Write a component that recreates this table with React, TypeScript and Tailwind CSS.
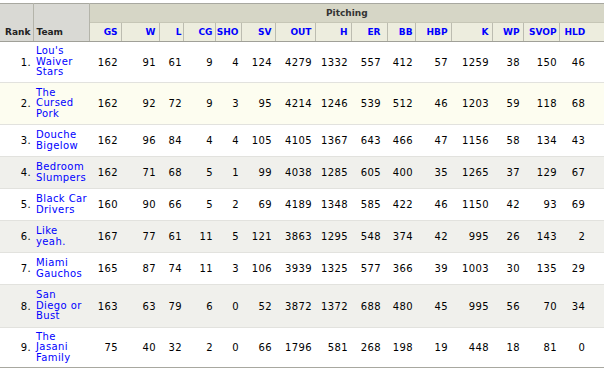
// Pitching standings table
const cols = [
  { label: 'GS', w: 'w-[32px]', pr: 'pr-[3px]' },
  { label: 'W', w: 'w-[38px]', pr: 'pr-[3px]' },
  { label: 'L', w: 'w-[24px]', pr: 'pr-[1px]' },
  { label: 'CG', w: 'w-[32px]', pr: 'pr-[2px]' },
  { label: 'SHO', w: 'w-[26px]', pr: 'pr-[2px]' },
  { label: 'SV', w: 'w-[34px]', pr: 'pr-[3px]' },
  { label: 'OUT', w: 'w-[40px]', pr: 'pr-[3px]' },
  { label: 'H', w: 'w-[36px]', pr: 'pr-[3px]' },
  { label: 'ER', w: 'w-[36px]', pr: 'pr-[6px]' },
  { label: 'BB', w: 'w-[28px]', pr: 'pr-[2px]' },
  { label: 'HBP', w: 'w-[36px]', pr: 'pr-[3px]' },
  { label: 'K', w: 'w-[41px]', pr: 'pr-[3px]' },
  { label: 'WP', w: 'w-[31px]', pr: 'pr-[3px]' },
  { label: 'SVOP', w: 'w-[36px]', pr: 'pr-[2px]' },
  { label: 'HLD', w: 'w-[45px]', pr: 'pr-[19px]' },
];

const rows = [
  { team: ["Lou's", 'Waiver', 'Stars'], h: 'h-[41px]', bg: 'bg-white', stats: [162, 91, 61, 9, 4, 124, 4279, 1332, 557, 412, 57, 1259, 38, 150, 46] },
  { team: ['The', 'Cursed', 'Pork'], h: 'h-[42px]', bg: 'bg-[#fdfdf0]', stats: [162, 92, 72, 9, 3, 95, 4214, 1246, 539, 512, 46, 1203, 59, 118, 68] },
  { team: ['Douche', 'Bigelow'], h: 'h-[32px]', bg: 'bg-white', stats: [162, 96, 84, 4, 4, 105, 4105, 1367, 643, 466, 47, 1156, 58, 134, 43] },
  { team: ['Bedroom', 'Slumpers'], h: 'h-[32px]', bg: 'bg-[#f0f0ec]', stats: [162, 71, 68, 5, 1, 99, 4038, 1285, 605, 400, 35, 1265, 37, 129, 67] },
  { team: ['Black Car', 'Drivers'], h: 'h-[32px]', bg: 'bg-white', stats: [160, 90, 66, 5, 2, 69, 4189, 1348, 585, 422, 46, 1150, 42, 93, 69] },
  { team: ['Like', 'yeah.'], h: 'h-[32px]', bg: 'bg-[#f0f0ec]', stats: [167, 77, 61, 11, 5, 121, 3863, 1295, 548, 374, 42, 995, 26, 143, 2] },
  { team: ['Miami', 'Gauchos'], h: 'h-[32px]', bg: 'bg-white', stats: [165, 87, 74, 11, 3, 106, 3939, 1325, 577, 366, 39, 1003, 30, 135, 29] },
  { team: ['San', 'Diego or', 'Bust'], h: 'h-[43px]', bg: 'bg-[#f0f0ec]', stats: [163, 63, 79, 6, 0, 52, 3872, 1372, 688, 480, 45, 995, 56, 70, 34] },
  { team: ['The', 'Jasani', 'Family'], h: 'h-[40px]', bg: 'bg-white', stats: [75, 40, 32, 2, 0, 66, 1796, 581, 268, 198, 19, 448, 18, 81, 0] },
];

export default function App() {
  return (
    <div className="w-[604px] h-[376px] bg-white pt-[3px] font-['DejaVu_Sans',sans-serif]">
      <table className="w-[604px] table-fixed border-collapse">
        <colgroup>
          <col className="w-[33px]" />
          <col className="w-[56px]" />
          {cols.map((c) => (
            <col key={c.label} className={c.w} />
          ))}
        </colgroup>
        <thead>
          <tr className="h-[19px]">
            <th rowSpan={2} className="bg-[#d9d9d4] border-t border-t-[#a8a8a0] border-r border-r-[#b4b4aa] border-b border-b-[#a0a098] align-bottom text-right pr-[2px] pb-[4px] text-[9px] font-bold leading-[9px] text-[#222]">
              Rank
            </th>
            <th rowSpan={2} className="bg-[#d9d9d4] border-t border-t-[#a8a8a0] border-r border-r-[#b4b4aa] border-b border-b-[#a0a098] align-bottom text-left pl-[3px] pb-[4px] text-[9px] font-bold leading-[9px] text-[#222]">
              Team
            </th>
            <th colSpan={15} className="bg-[#d6d6c6] border-t border-t-[#a8a8a0] border-b border-b-[#c6c6b6] text-center text-[9px] font-bold leading-[9px] text-[#333]">
              Pitching
            </th>
          </tr>
          <tr className="h-[19px]">
            {cols.map((c, i) => (
              <th
                key={c.label}
                className={`bg-[#ededde] border-b border-b-[#a0a098] ${i < cols.length - 1 ? 'border-r border-r-[#bcbcb0]' : ''} text-right ${c.pr} align-middle text-[9px] font-bold leading-[9px] text-[#0000ff] whitespace-nowrap`}
              >
                {c.label}
              </th>
            ))}
          </tr>
        </thead>
        <tbody className="text-[10px] tracking-[0.4px] text-black">
          {rows.map((r, idx) => (
            <tr key={idx} className={`${r.h} ${r.bg} border-b ${idx === rows.length - 1 ? 'border-b-[#a8a8a0]' : 'border-b-[#e2e2de]'}`}>
              <td className="text-right pr-[2px] align-middle">{idx + 1}.</td>
              <td className="pl-[3px] align-middle leading-[10.5px]">
                {r.team.map((line) => (
                  <a key={line} href="#" className="block whitespace-nowrap text-[#0000ff]">
                    {line}
                  </a>
                ))}
              </td>
              {r.stats.map((v, i) => (
                <td key={i} className={`text-right ${cols[i].pr} align-middle whitespace-nowrap`}>
                  {v}
                </td>
              ))}
            </tr>
          ))}
        </tbody>
      </table>
    </div>
  );
}
